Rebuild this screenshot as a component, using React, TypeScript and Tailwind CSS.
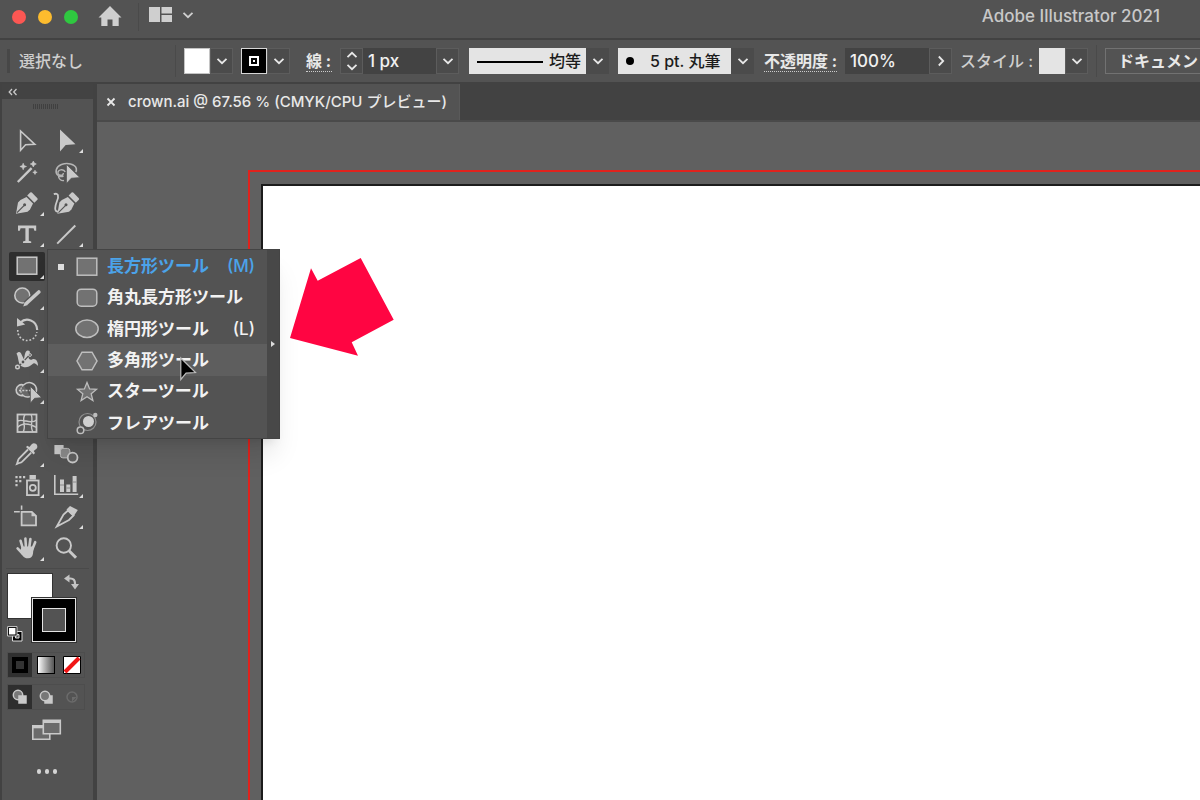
import {clsx} from "clsx"
import {ReactNode, useState} from "react"

type Tool = {
  label: string
  icon: ReactNode
  /**
   * Single tools have no flyout, and no corner mark.
   */
  single?: boolean
}

type ShapeTool = {
  label: string
  shortcut?: string
  icon: ReactNode
}

const Icon = ({children, className = "size-7"}: {children: ReactNode; className?: string}) => (
  <svg viewBox="0 0 28 28" fill="none" stroke="currentColor" strokeWidth={1.6} className={className} aria-hidden>
    {children}
  </svg>
)

const PenNib = ({x = 0}: {x?: number}) => (
  <g transform={`translate(${x} 0)`}>
    <path d="M3 24.800 5 13.500 7.500 11l6-3 6.500 6.500L17 20.500l-2.400 2.200Z" fill="currentColor" stroke="none" />
    <path d="m14.200 6.600 3-3q.8-.6 1.600 0l5.600 5.600q.6.8 0 1.600l-3 3Z" fill="currentColor" stroke="none" />
    <path d="m4 23.600 7-7" stroke="#535353" strokeWidth={1.2} />
    <circle cx="11.600" cy="15.800" r="1.500" fill="#535353" stroke="none" />
  </g>
)

const RectShape = () => <rect x="4.200" y="5.200" width="19.600" height="17" fill="#727272" strokeWidth={1.5} />

const tools: (Tool | null)[] = [
  {label: "選択ツール", single: true, icon: <path d="M7.600 4v19.200l5-5.400 9.200-.5Z" />},
  {label: "ダイレクト選択ツール", icon: <path d="M8 2.600v22l5.700-6.600 9.800-.7Z" fill="currentColor" stroke="none" />},
  {
    label: "自動選択ツール",
    single: true,
    icon: (
      <>
        <path d="M4.800 24 18.600 10.200" strokeWidth={2.4} />
        <path
          d="m10.200 5.200.9 2.400 2.400.9-2.400.9-.9 2.400-.9-2.400-2.400-.9 2.400-.9ZM20.300 3l1 2 2 1-2 1-1 2-1-2-2-1 2-1ZM22 12.200l.6 1.500 1.600.6-1.600.7-.6 1.500-.7-1.500-1.500-.7 1.500-.6Z"
          fill="currentColor"
          stroke="currentColor"
          strokeWidth={.6}
        />
      </>
    ),
  },
  {
    label: "なげなわツール",
    single: true,
    icon: (
      <>
        <path d="M6 17.500C2.500 14 4 8.500 9.500 6.500s13.500-.8 14.800 4c.3 1.500 0 2.700-.6 3.500" stroke="#b5b5b5" />
        <path d="M13.200 14c-1.500-3.500-8-2.500-7.200 1.200.8 3 5.500 2.700 5.300-.2M6 17.500c2 1.500 4.500 1 5.500.5M6.500 18c0 3 2.500 5 5.500 4.500" stroke="#b5b5b5" strokeWidth={1.4} />
        <path d="M14.500 6.500v19l4.800-5.300 8.500-.6Z" fill="currentColor" stroke="#535353" strokeWidth={.7} />
      </>
    ),
  },
  {label: "ペンツール", icon: <PenNib />},
  {
    label: "曲線ツール",
    single: true,
    icon: (
      <>
        <PenNib x={2.4} />
        <path d="M1.800 5.200C6.500 3.500 7 7 5 12s-3.300 11 1.400 10.600" strokeWidth={1.8} />
      </>
    ),
  },
  {
    label: "文字ツール",
    icon: (
      <path
        d="M5 4.600h18.200v5.200h-1.800l-.8-2.600h-4.800v12.600l2.400.6v1.600h-8.200v-1.600l2.400-.6V7.200H7.600l-.8 2.600H5Z"
        fill="currentColor"
        stroke="none"
      />
    ),
  },
  {label: "直線ツール", icon: <path d="M5.200 22.600 23.300 4.500" strokeWidth={2} />},
  {label: "長方形ツール", icon: <RectShape />},
  null,
  {
    label: "Shaper ツール",
    icon: (
      <>
        <circle cx="9.300" cy="12.500" r="7.500" fill="#727272" />
        <path d="m12.500 21.200 12.800-12" stroke="#535353" strokeWidth={6} />
        <path d="m13.800 20 12-11" strokeWidth={3.6} strokeLinecap="round" />
        <path d="m10.200 23.600 1.600-4.700 3 3.200Z" fill="currentColor" stroke="none" />
      </>
    ),
  },
  null,
  {
    label: "回転ツール",
    icon: (
      <>
        <path d="M7.500 7.500C13 2 24 5 24.200 15" strokeWidth={2.2} />
        <path d="M4 3v8.400l8.200-2Z" fill="currentColor" stroke="none" />
        <path d="M4.800 15a9.500 9.500 0 0 0 19 2" strokeDasharray="1.800 1.800" />
      </>
    ),
  },
  null,
  {
    label: "線幅ツール",
    icon: (
      <>
        <path
          d="M3.500 7.500c3-2.500 4-1.500 5.200 1.200l2.200 4.600c1-3.300.8-8.600 4-8.800 2.700 0 2.300 3 1 5.200-.9 2.200.2 4.800 3.200 3.700 3.400-1.400 6 1.600 5.900 6.600-3-3.400-4-3.400-6-1.400-3 3-8.500 3.800-11.700.6-1.600-1.800-1.800-5-2.300-7-.3-2-.5-2.500-1.500-4.700Z"
          fill="currentColor"
          stroke="none"
        />
        <path d="m5.500 20.500 4.600-4.600L16 9.500" stroke="#535353" strokeWidth={1.2} />
        <circle cx="10" cy="16" r="2" fill="#535353" strokeWidth={1.2} />
        <circle cx="4.500" cy="21" r="1.800" strokeWidth={1.4} />
        <circle cx="17" cy="9" r="1.400" fill="#535353" strokeWidth={1} />
      </>
    ),
  },
  null,
  {
    label: "シェイプ形成ツール",
    icon: (
      <>
        <path d="M10.500 7c5.500-5 13-1.500 13 5 0 2-.5 4-1.800 5" />
        <path d="M10.500 7a5.500 5.500 0 1 0-.5 10.500c3 2.500 5 1.500 7.300 1" fill="#686868" />
        <path d="M10.500 7c-3.500 3-3.500 7.500-.5 10.500" strokeDasharray="2 1.300" strokeWidth={1.2} />
        <path d="M6 12.500h12" strokeDasharray="2 1.300" strokeWidth={1.4} />
        <path d="M17.300 8.300v17l4.300-5 7.200-.6Z" fill="currentColor" stroke="#535353" strokeWidth={.8} />
      </>
    ),
  },
  null,
  {
    label: "メッシュツール",
    single: true,
    icon: (
      <>
        <rect x="4.500" y="5.500" width="19" height="17.500" fill="#5a5a5a" strokeWidth={1.8} />
        <path d="M4.500 12c6-3 13 4 19-1M4.500 18.500c5-5 12-4 19 0M12 5.500c-4 6 2 11-2 17.500M18 5.500c3 5-2 11 2 17.500" strokeWidth={1.4} />
      </>
    ),
  },
  null,
  {
    label: "スポイトツール",
    icon: (
      <>
        <path d="M15 9.500 6 18.500c-1.200 1.500-1 3-2 5.300 2.300-1 3.800-.9 5.200-2.200l9-9" strokeWidth={1.8} />
        <path
          d="m13 7 1.400-1.200 2 1.200 2.300-2.800c3-3 7.600 1.300 4.800 4.600l-2.800 2.300 1.300 2-1.400 1.300Z"
          fill="currentColor"
          stroke="none"
        />
      </>
    ),
  },
  {
    label: "ブレンドツール",
    single: true,
    icon: (
      <>
        <path d="M2.400 5h9.200v9.200H2.400Z" fill="currentColor" stroke="none" />
        <rect x="8.400" y="8.400" width="9.500" height="9.500" rx="2.500" fill="#898989" stroke="#bdbdbd" strokeWidth={1} />
        <circle cx="20.600" cy="17.600" r="4.900" fill="#606060" strokeWidth={1.8} />
      </>
    ),
  },
  {
    label: "シンボルスプレーツール",
    icon: (
      <>
        <path d="M2.400 4h2.200v2.200H2.400ZM6.200 4h2.200v2.200H6.200ZM10 4h2.200v2.200H10ZM2.400 8h2.200v2.200H2.400ZM6.200 8h2.200v2.200H6.200ZM2.400 12h2.200v2.200H2.400ZM16.500 3h6.400v4.500h-6.400Z" fill="currentColor" stroke="none" />
        <rect x="14" y="8.500" width="11.600" height="14.600" strokeWidth={1.8} />
        <circle cx="19.800" cy="15.800" r="3" strokeWidth={1.8} />
      </>
    ),
  },
  {
    label: "棒グラフツール",
    icon: (
      <>
        <path d="M2.800 3v19.200h23.400" />
        <path d="M8 7.500h4V20H8ZM14.300 12.500h4V20h-4ZM20.600 4h4v16h-4Z" fill="currentColor" stroke="none" />
        <path d="M8 13h4M14.300 16h4M20.600 10h4" stroke="#8a8a8a" strokeWidth={1} />
      </>
    ),
  },
  {
    label: "アートボードツール",
    single: true,
    icon: (
      <>
        <path d="M8.600 2.500v4.200M1 8.800h5.800" />
        <path d="M8.600 8.800h10.200l4.200 4v9.600H8.600Z" fill="#6d6d6d" strokeWidth={1.8} />
        <path d="M18.500 8.500v4.800h5Z" fill="currentColor" stroke="none" />
      </>
    ),
  },
  {
    label: "スライスツール",
    icon: (
      <>
        <path d="M4.800 23.500 11.500 11.500l4.500-4 5.500 5-4.500 4.500Z" strokeWidth={1.8} />
        <path d="m14.500 6.500 3.500-3.500 7.800 4-4.300 6.500Z" fill="currentColor" stroke="none" />
      </>
    ),
  },
  {
    label: "手のひらツール",
    icon: (
      <>
        <path d="M10 15 7.600 6.800M13 14l-.6-9.400M16.200 14l1.200-9M19 16l3.200-7.800M9.500 19.500 4.600 14.400" strokeWidth={2.6} strokeLinecap="round" />
        <path d="M8.700 12.500h12l-.7 7c-.4 3-2 4.800-4.800 4.800-3 0-4.600-.8-6.200-3.300L7 17.500Z" fill="currentColor" stroke="none" />
      </>
    ),
  },
  {
    label: "ズームツール",
    single: true,
    icon: (
      <>
        <circle cx="11.800" cy="11.500" r="7.200" strokeWidth={1.9} />
        <path d="m17 16.800 7 7" strokeWidth={3} />
      </>
    ),
  },
]

const shapeTools: ShapeTool[] = [
  {label: "長方形ツール", shortcut: "(M)", icon: <RectShape />},
  {label: "角丸長方形ツール", icon: <rect x="4.200" y="5.200" width="19.600" height="17" rx="4" fill="#727272" strokeWidth={1.5} />},
  {label: "楕円形ツール", shortcut: "(L)", icon: <ellipse cx="14" cy="13.800" rx="11.200" ry="8.700" fill="#727272" strokeWidth={1.5} />},
  {label: "多角形ツール", icon: <path d="M9 5.200h10l5 8.800-5 8.800H9L4 14Z" fill="#727272" strokeWidth={1.5} />},
  {
    label: "スターツール",
    icon: <path d="m14 4.500 2.600 6.400 6.900.5-5.300 4.400 1.700 6.700-5.900-3.700-5.900 3.700 1.700-6.700-5.300-4.400 6.900-.5Z" fill="#727272" strokeWidth={1.3} />,
  },
  {
    label: "フレアツール",
    icon: (
      <>
        <circle cx="14.500" cy="13" r="8.500" stroke="#8f8f8f" strokeWidth={1.2} />
        <circle cx="15.500" cy="12.500" r="5.500" fill="#d0d0d0" stroke="none" />
        <circle cx="7.500" cy="21.300" r="3.300" fill="#535353" strokeWidth={1.5} />
        <circle cx="22.300" cy="6" r="2.200" fill="currentColor" stroke="none" />
      </>
    ),
  },
]

const Chevron = () => (
  <svg viewBox="0 0 12 12" className="size-3" fill="none" stroke="currentColor" strokeWidth={1.8} aria-hidden>
    <path d="m1.500 3.800 4.500 4.400 4.500-4.400" />
  </svg>
)

const ChevronButton = ({label}: {label: string}) => (
  <button
    type="button"
    aria-label={label}
    className="flex h-[26px] w-[23px] items-center justify-center border border-[#5c5c5c] bg-[#4b4b4b]"
  >
    <Chevron />
  </button>
)

const TitleBar = () => (
  <header className="flex h-10 items-center overflow-hidden border-b-2 border-[#424242] pb-1 pr-10">
    <div className="ml-3 flex gap-3">
      <button type="button" aria-label="閉じる" className="size-[14px] rounded-full bg-[#fc5753]" />
      <button type="button" aria-label="しまう" className="size-[14px] rounded-full bg-[#fdbc2e]" />
      <button type="button" aria-label="拡大" className="size-[14px] rounded-full bg-[#2fc840]" />
    </div>
    <button type="button" aria-label="ホーム" className="ml-5 text-[#cfcfcf]">
      <svg viewBox="0 0 24 22" className="h-[22px] w-6" fill="currentColor" aria-hidden>
        <path d="M12 0 23.500 11.500h-2.800V20H14.500v-6.500h-5V20H3.300v-8.500H.5Z" />
      </svg>
    </button>
    <span className="ml-4 h-7 w-px bg-[#4a4a4a]" />
    <button type="button" aria-label="ワークスペースの切り替え" className="ml-[10px] flex items-center gap-[10px] pb-1 text-[#cfcfcf]">
      <svg viewBox="0 0 23 16" className="h-4 w-[23px]" fill="currentColor" aria-hidden>
        <path d="M0 0h11v15H0ZM12.500 0H23v6.500H12.500ZM12.500 8H23v7H12.500Z" />
      </svg>
      <Chevron />
    </button>
    <h1 className="ml-auto text-[17px] text-[#c8c8c8]">Adobe Illustrator 2021</h1>
  </header>
)

const ControlBar = () => (
  <div className="flex h-11 items-center overflow-hidden whitespace-nowrap border-b-2 border-[#424242] text-base">
    <span className="ml-[7px] h-6 w-[3px] shrink-0 bg-[#474747]" />
    <span className="ml-[9px] w-[156px] shrink-0 text-[#cfcfcf]">選択なし</span>
    <span className="h-8 w-px shrink-0 bg-[#4a4a4a]" />
    <div className="ml-2 flex shrink-0">
      <button type="button" aria-label="塗り" className="size-[26px] border border-[#c4c4c4] bg-white" />
      <ChevronButton label="塗りのオプション" />
    </div>
    <div className="ml-2 flex shrink-0">
      <button type="button" aria-label="線のカラー" className="flex size-[26px] items-center justify-center border border-[#d6d6d6] bg-black">
        <span className="flex size-[10px] items-center justify-center border-2 border-white">
          <span className="size-[2px] bg-white" />
        </span>
      </button>
      <ChevronButton label="線のカラーのオプション" />
    </div>
    <div className="ml-4 flex shrink-0 items-center">
      <label htmlFor="stroke-width" className="mr-2 w-[26px] border-b border-dotted border-[#cccccc] font-bold leading-5">
        線 :
      </label>
      <div className="flex h-[26px] w-[23px] flex-col items-center justify-between border border-[#5c5c5c] bg-[#4b4b4b]">
        <button type="button" aria-label="線幅を増やす" className="rotate-180">
          <Chevron />
        </button>
        <button type="button" aria-label="線幅を減らす">
          <Chevron />
        </button>
      </div>
      <input id="stroke-width" defaultValue="1 px" className="h-[26px] w-[73px] bg-[#434343] px-[5px] text-[17px] text-[#f0f0f0]" />
      <ChevronButton label="線幅の候補" />
    </div>
    <div className="relative ml-[10px] shrink-0 bg-[#e4e4e4]">
      <select
        aria-label="可変線幅プロファイル"
        className="block h-[26px] w-[140px] appearance-none border-r-[23px] border-[#4b4b4b] pl-20 text-[#1c1c1c]"
      >
        <option>均等</option>
      </select>
      <span className="pointer-events-none absolute left-2 top-[13px] h-[2px] w-[66px] bg-black" />
      <span className="pointer-events-none absolute right-[5px] top-[7px]">
        <Chevron />
      </span>
    </div>
    <div className="relative ml-[9px] shrink-0 bg-[#e4e4e4]">
      <select
        aria-label="ブラシ定義"
        className="block h-[26px] w-[136px] appearance-none border-r-[23px] border-[#4b4b4b] pl-8 text-[#1c1c1c]"
      >
        <option>5 pt. 丸筆</option>
      </select>
      <span className="pointer-events-none absolute left-2 top-[9px] size-2 rounded-full bg-black" />
      <span className="pointer-events-none absolute right-[5px] top-[7px]">
        <Chevron />
      </span>
    </div>
    <div className="ml-[10px] flex shrink-0 items-center">
      <label htmlFor="opacity" className="mr-2 w-[73px] border-b border-dotted border-[#cccccc] font-bold leading-5">
        不透明度 :
      </label>
      <input id="opacity" defaultValue="100%" className="h-[26px] w-[84px] bg-[#434343] px-[5px] text-[17px] text-[#f0f0f0]" />
      <button
        type="button"
        aria-label="不透明度スライダー"
        className="flex h-[26px] w-[23px] items-center justify-center border border-[#5c5c5c] bg-[#4b4b4b]"
      >
        <span className="-rotate-90">
          <Chevron />
        </span>
      </button>
    </div>
    <span className="ml-2 w-[79px] shrink-0 text-[#cfcfcf]">スタイル :</span>
    <div className="flex shrink-0">
      <button type="button" aria-label="グラフィックスタイル" className="size-[26px] bg-[#e4e4e4]" />
      <ChevronButton label="グラフィックスタイルのオプション" />
    </div>
    <span className="ml-2 h-8 w-px shrink-0 bg-[#4a4a4a]" />
    <button type="button" className="ml-2 h-[26px] flex-1 border border-r-0 border-[#727272] pl-3 text-left font-bold">
      ドキュメン
    </button>
  </div>
)

const ShapeMenu = () => {
  const [highlighted, setHighlighted] = useState(3)

  return (
    <div className="absolute -top-px left-[38px] z-10 flex h-[190px] w-[233px] border border-[#444444] bg-[#535353] shadow-xl">
      <ul role="menu" className="grid flex-1 grid-rows-6">
        {shapeTools.map((tool, i) => (
          <li key={tool.label} role="none" className={clsx({"bg-[#5e5e5e]": highlighted === i})}>
            <button
              type="button"
              role="menuitem"
              onMouseEnter={() => setHighlighted(i)}
              className={clsx("flex h-full w-full items-center whitespace-nowrap pr-3 pt-px text-[17px] font-bold", {
                "text-[#4ba3ea]": i === 0,
                "text-[#f2f2f2]": i !== 0,
              })}
            >
              <span className="flex w-[25px] justify-center">{i === 0 && <span className="size-[6px] bg-[#dddddd]" />}</span>
              <span className="mr-[6px] text-[#bebebe]">
                <Icon>{tool.icon}</Icon>
              </span>
              {tool.label}
              <span className="ml-auto font-medium">{tool.shortcut}</span>
            </button>
          </li>
        ))}
      </ul>
      <button type="button" aria-label="ティアオフ" className="flex w-3 items-center justify-center bg-[#484848]">
        <svg viewBox="0 0 4 6" className="h-[6px] w-1" fill="#dddddd" aria-hidden>
          <path d="M0 0 4 3 0 6Z" />
        </svg>
      </button>
      <svg viewBox="0 0 18 26" className="pointer-events-none absolute left-[131px] top-[106px] h-[26px] w-[18px]" aria-hidden>
        <path d="M1.800 2v21.500l5.300-6.300 9.400-.6Z" fill="#000" stroke="#bcbcbc" strokeWidth={1.2} />
      </svg>
    </div>
  )
}

const ColorControls = () => (
  <div className="grid h-[70px] w-[72px] grid-cols-[24px_24px_24px] grid-rows-[24px_21px_25px]">
    <button type="button" aria-label="塗り" className="col-span-2 col-start-1 row-span-2 row-start-1 size-[46px] border border-[#333333] bg-white" />
    <button
      type="button"
      aria-label="線"
      className="col-span-2 col-start-2 row-span-2 row-start-2 flex size-[46px] items-center justify-center border border-[#333333] bg-black"
    >
      <span className="flex size-11 items-center justify-center border border-[#e4e4e4]">
        <span className="size-6 border border-[#e4e4e4] bg-[#535353]" />
      </span>
    </button>
    <button type="button" aria-label="塗りと線を入れ替え" className="col-start-3 row-start-1 mb-[6px] ml-[9px]">
      <svg viewBox="0 0 16 16" className="size-4" fill="none" stroke="#c4c4c4" strokeWidth={2.2} aria-hidden>
        <path d="M4 4.500h2.500q4.500 0 4.500 5V11" />
        <path d="M5.500.5v8L0 4.500ZM7 10h8l-4 5.500Z" fill="#c4c4c4" stroke="none" />
      </svg>
    </button>
    <button type="button" aria-label="初期設定の塗りと線" className="col-start-1 row-start-3 mt-[6px]">
      <svg viewBox="0 0 16 16" className="size-4" aria-hidden>
        <path d="M5.500 5.500h9.500V15H5.500Z" fill="#000" stroke="#ddd" />
        <path d="M8.500 8.500h3.500V12H8.500Z" fill="#535353" stroke="#ddd" />
        <path d="M.6.6h9.400V10H.6Z" fill="#000" stroke="#ccc" />
        <path d="M2 2h6.500v6.500H2Z" fill="#fff" />
      </svg>
    </button>
  </div>
)

const DrawMode = ({children}: {children: ReactNode}) => (
  <svg viewBox="0 0 16 16" className="size-4" fill="#777777" stroke="currentColor" strokeWidth={1.5} aria-hidden>
    {children}
  </svg>
)

const modeStyles = "flex size-6 items-center justify-center"

const ToolPanel = () => (
  <aside className="flex w-[97px] shrink-0 flex-col border-l-2 border-r-4 border-[#424242] bg-[#535353] text-[#c9c9c9]">
    <div className="flex h-[15px] items-center bg-[#434343] pl-[6px]">
      <button type="button" aria-label="パネルを折りたたむ">
        <svg viewBox="0 0 10 8" className="h-2 w-[10px]" fill="none" stroke="currentColor" strokeWidth={1.3} aria-hidden>
          <path d="M4 1 1.200 4 4 7M8.500 1 5.700 4l2.800 3" />
        </svg>
      </button>
    </div>
    <div className="ml-[31px] mt-[5px] h-[5px] w-[26px] bg-[repeating-linear-gradient(90deg,#404040_0_1px,#535353_1px_2px)]" />
    <div className="ml-[7px] mt-4 grid h-[439px] auto-rows-fr grid-cols-[39px_39px]">
      {tools.map((tool, i) =>
        tool ? (
          <div key={tool.label} className="relative flex items-center">
            <button
              type="button"
              aria-label={tool.label}
              className={clsx("relative flex h-[29px] w-9 items-center justify-center", {
                "rounded-xs bg-[#2e2e2e]": i === 8,
              })}
            >
              <Icon>{tool.icon}</Icon>
              {!tool.single && (
                <svg viewBox="0 0 4 4" className="absolute bottom-[2px] right-px size-1" fill="#dddddd" aria-hidden>
                  <path d="M4 0v4H0Z" />
                </svg>
              )}
            </button>
            {i === 8 && <ShapeMenu />}
          </div>
        ) : (
          <div key={i} />
        )
      )}
    </div>
    <hr className="mx-1 mt-1 border-[#4a4a4a]" />
    <div className="mt-1 pl-[5px]">
      <ColorControls />
    </div>
    <div className="ml-[5px] mt-[9px] flex w-[78px] gap-[2px] border border-[#4d4d4d]">
      <button type="button" aria-label="カラー" className={clsx(modeStyles, "bg-[#303030]")}>
        <span className="size-4 border-4 border-black bg-[#333333]" />
      </button>
      <button type="button" aria-label="グラデーション" className={modeStyles}>
        <span className="size-[18px] border border-black bg-linear-to-r from-white to-[#555555]" />
      </button>
      <button type="button" aria-label="なし" className={modeStyles}>
        <svg viewBox="0 0 18 18" className="size-[18px]" aria-hidden>
          <path d="M.5.5h17v17H.5Z" fill="#fff" stroke="#000" />
          <path d="m2 16 14-14" stroke="#f01515" strokeWidth={4} />
        </svg>
      </button>
    </div>
    <div className="ml-[5px] mt-[6px] flex w-[78px] gap-[2px] border border-[#4d4d4d]">
      <button type="button" aria-label="標準描画" className={clsx(modeStyles, "bg-[#2e2e2e]")}>
        <DrawMode>
          <circle cx="6" cy="6" r="4.700" />
          <path d="M7 7h7v7H7Z" fill="currentColor" />
        </DrawMode>
      </button>
      <button type="button" aria-label="背面描画" className={modeStyles}>
        <DrawMode>
          <path d="M7 7h7v7H7Z" fill="currentColor" />
          <circle cx="7" cy="7" r="4.700" />
        </DrawMode>
      </button>
      <button type="button" aria-label="内側描画" disabled className={clsx(modeStyles, "text-[#6b6b6b]")}>
        <DrawMode>
          <circle cx="8" cy="8" r="5" fill="none" />
          <path d="M8 8h4.500L8 12.500Z" fill="currentColor" stroke="none" />
        </DrawMode>
      </button>
    </div>
    <button type="button" aria-label="スクリーンモードを変更" className="ml-[29px] mt-2 w-8">
      <svg viewBox="0 0 32 24" className="h-6 w-8" fill="#6b6b6b" stroke="currentColor" strokeWidth={1.6} aria-hidden>
        <path d="M1.800 7.800h17v13.400h-17ZM1.800 9h17" />
        <path d="M12.300 2.300h17v13.400h-17Z" />
        <path d="M12.300 3.500h17" strokeWidth={3} />
        <path d="M1.800 8.800h10" strokeWidth={3} />
      </svg>
    </button>
    <button type="button" aria-label="ツールバーを編集" className="mb-6 ml-[35px] mt-[27px] flex w-5 gap-1">
      <span className="size-[5px] rounded-full bg-[#d4d4d4]" />
      <span className="size-[5px] rounded-full bg-[#d4d4d4]" />
      <span className="size-[5px] rounded-full bg-[#d4d4d4]" />
    </button>
  </aside>
)

const DocumentArea = () => (
  <main className="flex min-w-0 flex-1 flex-col">
    <div className="flex h-[38px] border-b-2 border-[#4a4a4a] bg-[#424242]">
      <div className="flex items-center whitespace-nowrap border-r border-[#5a5a5a] bg-[#535353] pl-[9px] pr-3 text-[15px]">
        <button type="button" aria-label="ドキュメントを閉じる" className="mr-[12px]">
          <svg viewBox="0 0 10 10" className="size-[10px]" fill="none" stroke="currentColor" strokeWidth={1.8} aria-hidden>
            <path d="m1.500 1.500 7 7M8.500 1.500l-7 7" />
          </svg>
        </button>
        <h2>crown.ai @ 67.56 % (CMYK/CPU プレビュー)</h2>
      </div>
    </div>
    <div className="relative flex flex-1 bg-[#606060] pl-[151px] pt-[48px]">
      <div className="flex flex-1 border-l-2 border-t-2 border-[#e0221c] pl-[11px] pt-[12px]">
        <div className="flex-1 border-l-2 border-t-2 border-[#1c1c1c] bg-white" />
      </div>
      <svg viewBox="0 0 104 98" className="absolute left-[193px] top-[136px] h-[98px] w-[104px]" fill="#ff0542" aria-hidden>
        <path d="M0 80 21 10.300l6.700 12.400L70.700 0l33 61.700-42 22.600 6.300 13.400Z" />
      </svg>
    </div>
  </main>
)

const App = () => (
  <div className="flex min-h-screen flex-col overflow-hidden bg-[#535353] font-['Inter','Noto_Sans_CJK_JP',sans-serif] font-medium text-[#e8e8e8]">
    <TitleBar />
    <ControlBar />
    <div className="flex flex-1">
      <ToolPanel />
      <DocumentArea />
    </div>
  </div>
)

export default App
